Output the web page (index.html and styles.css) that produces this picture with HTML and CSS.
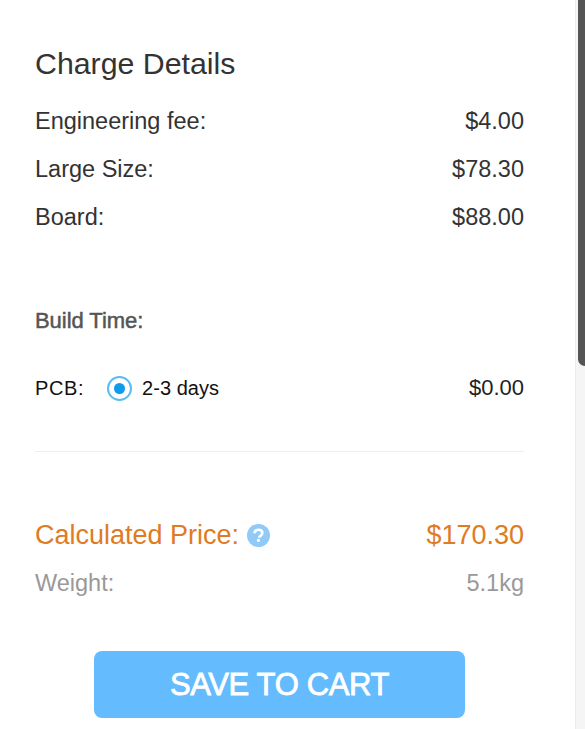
FILE: index.html
```html
<!DOCTYPE html>
<html lang="en">
<head>
<meta charset="utf-8">
<title>Charge Details</title>
<link rel="stylesheet" href="styles.css">
</head>
<body>
<div class="page">
  <main class="panel">
    <h2 class="title">Charge Details</h2>
    <div class="row"><span>Engineering fee:</span><span>$4.00</span></div>
    <div class="row"><span>Large Size:</span><span>$78.30</span></div>
    <div class="row"><span>Board:</span><span>$88.00</span></div>
    <h3 class="build-title">Build Time:</h3>
    <div class="build-row">
      <span class="build-label">PCB:</span>
      <span class="radio"><span class="radio-dot"></span></span>
      <span class="build-option">2-3 days</span>
      <span class="build-price">$0.00</span>
    </div>
    <hr class="divider">
    <div class="row price">
      <span class="price-label">Calculated Price:
        <svg class="help" viewBox="0 0 24 24" aria-hidden="true"><circle cx="12" cy="12" r="12" fill="#90caf9"/><path d="M8 9.6C8 7.2 9.8 6 12 6s4 1.2 4 3.3c0 1.7-1 2.4-2 3.1-.9.6-1.2 1-1.2 1.9" fill="none" stroke="#fff" stroke-width="2.8"/><rect x="10.4" y="15.6" width="2.9" height="2.9" fill="#fff"/></svg>
      </span>
      <span>$170.30</span>
    </div>
    <div class="row weight"><span>Weight:</span><span>5.1kg</span></div>
    <div class="actions"><button class="save" type="button">SAVE TO CART</button></div>
  </main>
  <aside class="scrollbar"><div class="thumb"></div></aside>
</div>
</body>
</html>
```
FILE: styles.css
```css
* { box-sizing: border-box; }
html, body { margin: 0; height: 100%; background: #fff; overflow: hidden; }
body { font-family: "Liberation Sans", Arial, sans-serif; color: #333; }
.page { display: flex; height: 729px; }
.panel { flex: 1; padding: 45px 51px 0 35px; min-width: 0; }
.title { margin: 0 0 15px; font-size: 30.3px; line-height: 37px; font-weight: 400; color: #333; }
.row { display: flex; justify-content: space-between; align-items: center; font-size: 23.5px; line-height: 48px; height: 48px; color: #333; }
.build-title { margin: 68px 0 0; font-size: 22px; line-height: 24px; font-weight: 400; color: #555; -webkit-text-stroke: 0.5px #555; letter-spacing: -0.05px; }
.build-row { display: flex; align-items: center; margin-top: 42px; height: 26px; font-size: 20px; color: #111; }
.build-label { width: 72px; letter-spacing: 0.6px; }
.radio { display: flex; align-items: center; justify-content: center; width: 25px; height: 25px; border: 2px solid #5bbcee; border-radius: 50%; }
.radio-dot { width: 11px; height: 11px; border-radius: 50%; background: #0f9be8; }
.build-option { margin-left: 10px; letter-spacing: 0.05px; }
.build-price { margin-left: auto; font-size: 22px; color: #222; }
.divider { margin: 50px 0 0; border: 0; border-top: 1px solid #eee; }
.price { margin-top: 59px; font-size: 27px; }
.price, .price span { color: #e07b1f; }
.price-label { display: flex; align-items: center; gap: 8px; }
.help { width: 23px; height: 23px; }
.row.weight { color: #999; }
.actions { display: flex; justify-content: center; padding-top: 44px; }
.save { width: 371px; height: 67px; border: 0; border-radius: 8px; background: #64bbfd; color: #fff; font: 400 31px "Liberation Sans", Arial, sans-serif; -webkit-text-stroke: 0.8px #fff; letter-spacing: -0.35px; padding: 0; }
.scrollbar { flex: none; width: 10px; background: #f5f5f5; border-left: 1px solid #ececec; }
.thumb { margin-left: 2px; height: 366px; background: #555; border-bottom-left-radius: 7px; }
```
